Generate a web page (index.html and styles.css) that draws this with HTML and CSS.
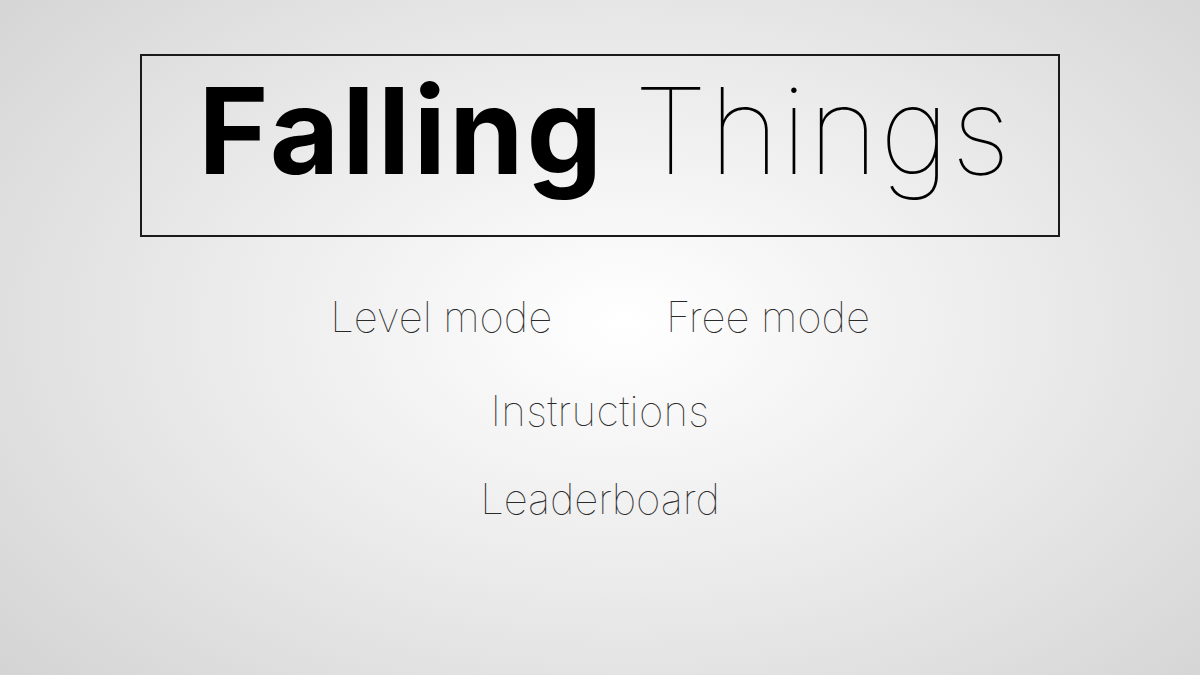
FILE: index.html
```html
<!DOCTYPE html>
<html>
<head>
<meta charset="utf-8">
<link rel="stylesheet" href="styles.css">
</head>
<body>
<div class="page">
  <header class="title-box">
    <h1 class="title"><span class="bold">Falling</span> <span class="thin">Things</span></h1>
  </header>
  <nav class="menu">
    <div class="row">
      <a class="item">Level mode</a>
      <a class="item">Free mode</a>
    </div>
    <a class="item single first">Instructions</a>
    <a class="item single">Leaderboard</a>
  </nav>
</div>
</body>
</html>
```
FILE: styles.css
```css
html, body {
  margin: 0;
  padding: 0;
  height: 100%;
}
body {
  background: radial-gradient(ellipse 75% 85% at 52% 48%, #ffffff 0%, #ebebeb 45%, #d0d0d0 100%);
  font-family: Inter, "Liberation Sans", sans-serif;
  color: #111;
  overflow: hidden;
}
.page {
  display: flex;
  flex-direction: column;
  align-items: center;
  padding-top: 54px;
}
.title-box {
  box-sizing: border-box;
  width: 920px;
  height: 183px;
  border: 2px solid #1a1a1a;
  display: flex;
  align-items: center;
  justify-content: center;
}
.title {
  margin: 0;
  font-size: 120px;
  line-height: 1;
  white-space: nowrap;
  position: relative;
  top: -15px;
  left: 5px;
}
.bold { font-weight: 700; color: #000; letter-spacing: 3px; }
.thin { font-weight: 100; color: #000; letter-spacing: 1.5px; }
.menu {
  display: flex;
  flex-direction: column;
  align-items: center;
  margin-top: 52px;
}
.row {
  display: flex;
  gap: 114px;
}
.item {
  font-size: 42px;
  font-weight: 100;
  line-height: 56px;
  color: #2a2a2a;
  cursor: pointer;
  letter-spacing: -0.1px;
}
.single.first { margin-top: 38px; letter-spacing: 0.3px; }
.single + .single { margin-top: 32px; }
```
